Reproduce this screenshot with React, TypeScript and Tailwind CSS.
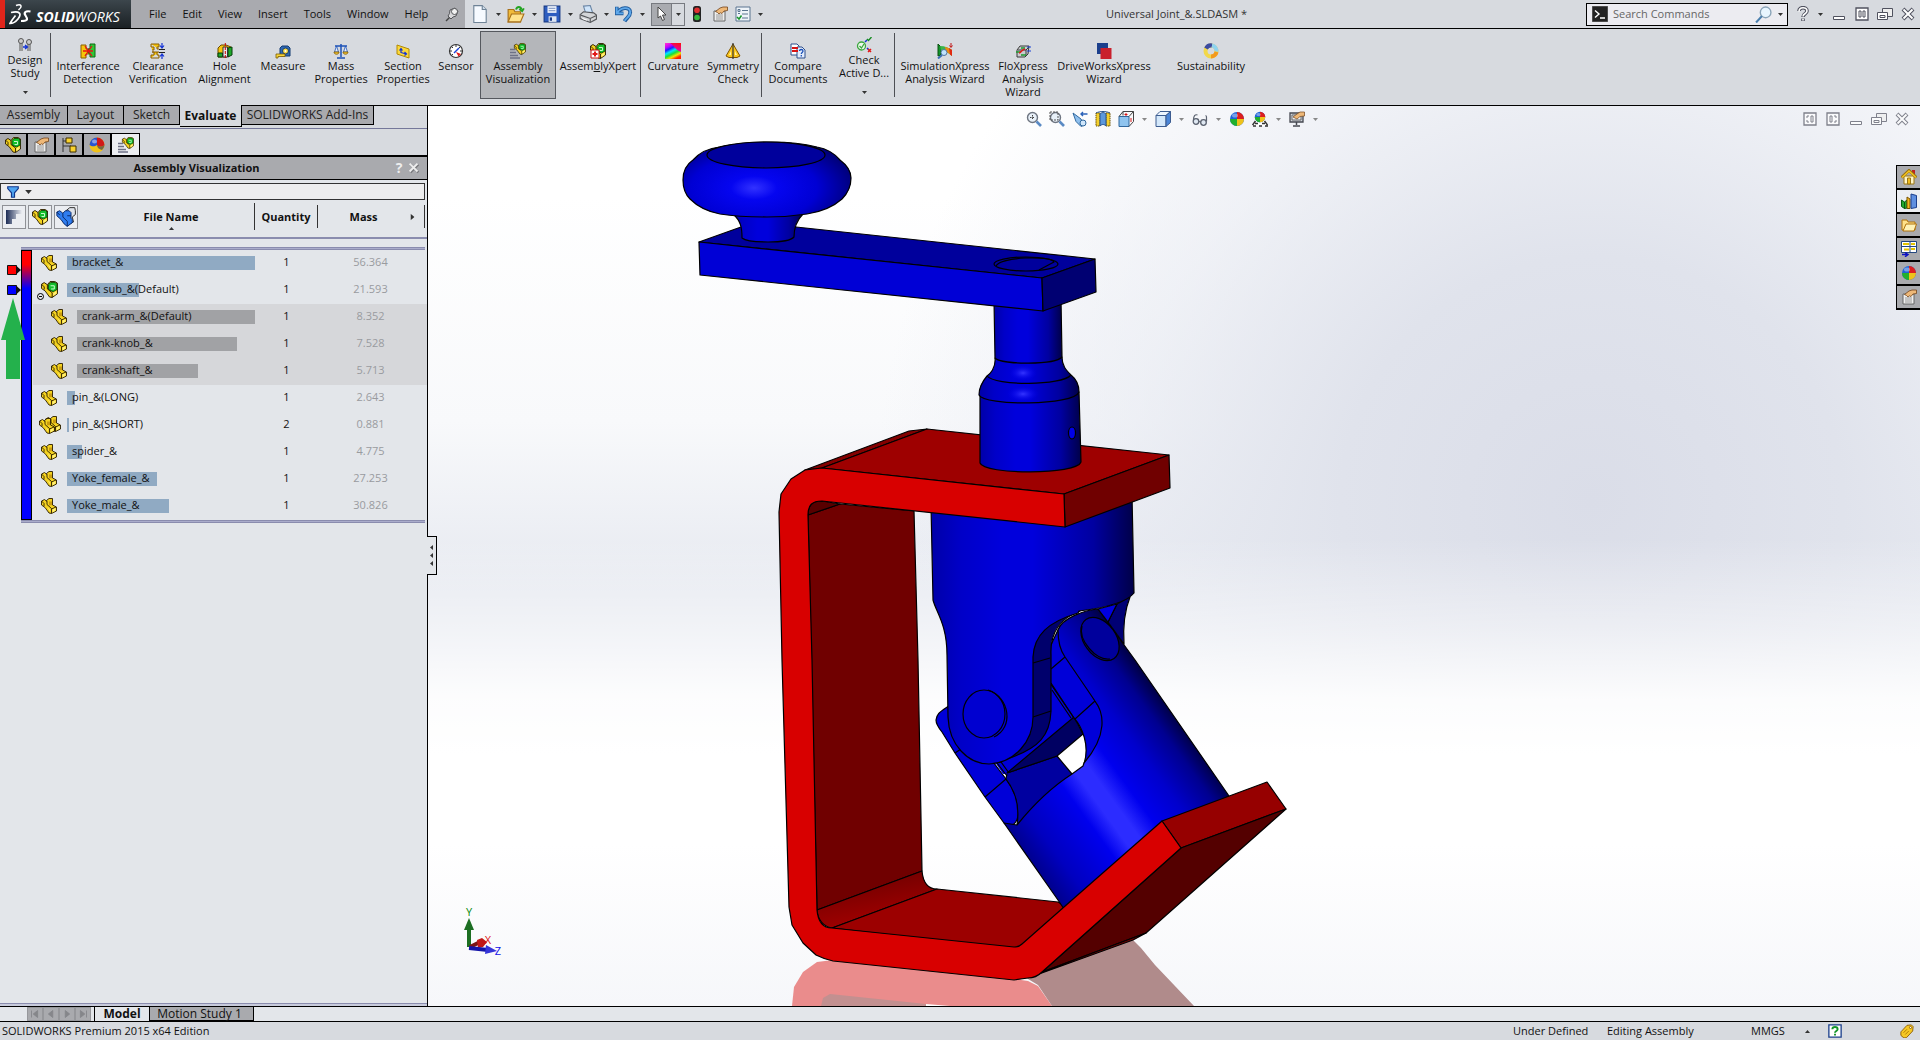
import { useState, type ReactNode } from "react";

type IconProps = { className?: string };

type PartRow = {
  id: string;
  name: string;
  quantity: number;
  mass: string;
  bar: number;
  icon: "part" | "assembly" | "multi";
  child?: boolean;
};

type Command = {
  lines: string[];
  icon: ReactNode;
  width: string;
  active?: boolean;
  dropdown?: boolean;
  divider?: boolean;
  accessKey?: string;
};

const menus = ["File", "Edit", "View", "Insert", "Tools", "Window", "Help"];

const tabs = [
  { name: "Assembly", width: "w-[68px]" },
  { name: "Layout", width: "w-[56px]" },
  { name: "Sketch", width: "w-[56px]" },
  { name: "Evaluate", width: "w-[62px]" },
  { name: "SOLIDWORKS Add-Ins", width: "w-[132px]" },
];

const rows: PartRow[] = [
  { id: "bracket", name: "bracket_&", quantity: 1, mass: "56.364", bar: 188, icon: "part" },
  { id: "crank-sub", name: "crank sub_&(Default)", quantity: 1, mass: "21.593", bar: 72, icon: "assembly" },
  { id: "crank-arm", name: "crank-arm_&(Default)", quantity: 1, mass: "8.352", bar: 178, icon: "part", child: true },
  { id: "crank-knob", name: "crank-knob_&", quantity: 1, mass: "7.528", bar: 160, icon: "part", child: true },
  { id: "crank-shaft", name: "crank-shaft_&", quantity: 1, mass: "5.713", bar: 121, icon: "part", child: true },
  { id: "pin-long", name: "pin_&(LONG)", quantity: 1, mass: "2.643", bar: 8, icon: "part" },
  { id: "pin-short", name: "pin_&(SHORT)", quantity: 2, mass: "0.881", bar: 2, icon: "multi" },
  { id: "spider", name: "spider_&", quantity: 1, mass: "4.775", bar: 15, icon: "part" },
  { id: "yoke-female", name: "Yoke_female_&", quantity: 1, mass: "27.253", bar: 90, icon: "part" },
  { id: "yoke-male", name: "Yoke_male_&", quantity: 1, mass: "30.826", bar: 102, icon: "part" },
];

function Icon({ className = "size-4", box = "0 0 16 16", children }: IconProps & { box?: string; children: ReactNode }) {
  return (
    <svg viewBox={box} className={`shrink-0 ${className}`} fill="none" aria-hidden="true">
      {children}
    </svg>
  );
}

function Caret({ className = "h-[3px] w-[5px] text-[#333]" }: IconProps) {
  return (
    <svg viewBox="0 0 5 3" className={`shrink-0 ${className}`} aria-hidden="true">
      <path d="M0 0h5L2.500 3z" fill="currentColor" />
    </svg>
  );
}

const partShape = (
  <>
    <path d="M.5 3 3.500 1.500 6 3.500 5.500 2.500 8 .5h3.500v6.500l4 2v4L10.500 15.500 8 15 4 9.500.5 7z" fill="#f4d21f" stroke="#2a1d00" strokeWidth=".9" />
    <path d="M8 3.500h3V7L8 7.500z" fill="#c99c10" />
    <path d="M6 3.500v3l4.500 4V15.500M10.500 11l4.500-2M.5 3 3 5.500V8" stroke="#2a1d00" strokeWidth=".9" />
    <path d="m11.500 11.500 3-1.500v2.500l-3 2zM6.500 9l2.500 2.500v2z" fill="#fff07a" />
  </>
);

const assemblyShape = (
  <>
    <path d="M.5 3 3 1.500l3 2L8.500.5H13L15.500 2v10L10.500 15.500 8 15 4 9.500.5 7z" fill="#f4d21f" stroke="#2a1d00" strokeWidth=".9" />
    <path d="M7 3.500 9 1.500h4.500L15 3v5l-3.500 2L7 8z" fill="#14c02c" stroke="#064d0c" strokeWidth=".9" />
    <path d="M9 4.500h3.500v3H9.500" stroke="#d8ffd8" strokeWidth=".9" />
    <path d="M6 3.500v4l4.500 3.500v4.500M.5 3 3 5.500V8" stroke="#2a1d00" strokeWidth=".9" />
    <path d="m11.500 11.500 3-2v2.500l-3 2z" fill="#fff07a" />
  </>
);

const ballShape = (
  <>
    <circle cx="8" cy="8" r="7" fill="#1d62d8" />
    <path d="M8 8V1a7 7 0 0 1 7 7z" fill="#dc1f1f" />
    <path d="M8 8h7a7 7 0 0 1-7 7z" fill="#efc21a" />
    <path d="M8 8v7a7 7 0 0 1-7-7z" fill="#21b02d" />
    <ellipse cx="6" cy="4.500" rx="3" ry="2" fill="#fff" opacity=".4" />
  </>
);

const handSheet = (
  <>
    <path d="M2 5h11v10H2z" fill="#eee" stroke="#666" />
    <path d="M4 9h7M4 11h7M4 13h7" stroke="#999" />
    <path d="M3.500 5.500 8 2l3-1h4.500v3.500L12 5l-2 2.500-1.500-.7L7 8 5.500 6.500z" fill="#eeb878" stroke="#73451c" strokeWidth=".8" />
  </>
);

function PartIcon() {
  return <Icon>{partShape}</Icon>;
}

function AssemblyIcon({ className }: IconProps) {
  return <Icon className={className}>{assemblyShape}</Icon>;
}

function MultiPartIcon() {
  return (
    <Icon className="h-[18px] w-[22px]" box="0 0 22 18">
      <g transform="translate(6 0)">{partShape}</g>
      <g transform="translate(0 2)">{partShape}</g>
    </Icon>
  );
}

function BallIcon({ className }: IconProps) {
  return <Icon className={className}>{ballShape}</Icon>;
}

function HandSheetIcon({ className }: IconProps) {
  return <Icon className={className}>{handSheet}</Icon>;
}

function VisualizeIcon({ className }: IconProps) {
  return (
    <Icon className={className}>
      <path d="M0 6.500h5M0 9.500h6M0 12.500h8M0 15h10" stroke="#6e7286" strokeWidth="1.600" />
      <g transform="translate(4 0) scale(.74)">{assemblyShape}</g>
    </Icon>
  );
}

const commands: Command[] = [
  {
    lines: ["Design", "Study"],
    width: "w-[50px]",
    dropdown: true,
    divider: true,
    icon: (
      <Icon>
        <path d="M4 5v9M12 5v9" stroke="#555" strokeWidth="3" />
        <path d="M4 5v9M12 5v9" stroke="#ddd" />
        <circle cx="4" cy="4" r="2.500" fill="#ccc" stroke="#555" />
        <circle cx="12" cy="5" r="2.500" fill="#ccc" stroke="#555" />
        <path d="M6 10h4m-2-2 2.500 2L8 12" stroke="#1332d6" strokeWidth="1.300" />
      </Icon>
    ),
  },
  {
    lines: ["Interference", "Detection"],
    width: "w-[74px]",
    icon: (
      <Icon>
        <path d="M1 2h5v4h4v5H6v4H1z" fill="#f6c50c" stroke="#8b5e00" />
        <path d="M15 1h-5v5H8v4h2v4h5z" fill="#2fc636" stroke="#0c6b12" />
        <path d="m5 3 7 10M12 3 5 13M3 8h10" stroke="#e81414" strokeWidth="1.300" />
      </Icon>
    ),
  },
  {
    lines: ["Clearance", "Verification"],
    width: "w-[66px]",
    icon: (
      <Icon>
        <path d="M1 1h8v3H7v2h2M1 1v3h3v3H2M1 15v-3h3V9H2h7M9 15H1M9 15v-3H7V9" fill="#f6c50c" stroke="#8b5e00" />
        <path d="M9 6.500h6M9 9.500h6" stroke="#222" />
        <path d="M12 0v4m-2-1.500L12 5l2-2.500M12 16v-4m-2 1.500L12 11l2 2.500" stroke="#1332d6" strokeWidth="1.200" />
      </Icon>
    ),
  },
  {
    lines: ["Hole", "Alignment"],
    width: "w-[67px]",
    icon: (
      <Icon>
        <path d="M1 5 4 2h5l5 2v7l-4 3H1z" fill="#f6c50c" stroke="#6c4a00" />
        <path d="M1 10h4.500v4H1zM11 5l4-1v8l-4 2z" fill="#1fa82a" stroke="#063f0b" />
        <path d="M6 4h4.500v10H6z" fill="#e8e8e8" stroke="#333" />
        <path d="M8.300 0v16" stroke="#c00" strokeDasharray="3 1" />
      </Icon>
    ),
  },
  {
    lines: ["Measure"],
    width: "w-[50px]",
    icon: (
      <Icon>
        <path d="M5 12V5l2-2h6l2 2v8H7z" fill="#2f69b4" stroke="#123a70" />
        <circle cx="10.500" cy="8" r="3" fill="#f6d743" stroke="#123a70" />
        <circle cx="10.500" cy="8" r="1" fill="#fff" />
        <path d="M1 11h9v2.500H3V15H1z" fill="#f8d63a" stroke="#7a5a00" strokeWidth=".8" />
      </Icon>
    ),
  },
  {
    lines: ["Mass", "Properties"],
    width: "w-[66px]",
    icon: (
      <Icon>
        <path d="M2 3h12M8 1v13M4 15h8" stroke="#1d52b8" strokeWidth="1.500" />
        <path d="m3.500 3-2 6h4zM12.500 3l-2 6h4z" fill="#e5eefb" stroke="#1d52b8" strokeWidth=".8" />
        <path d="M1 9h5c0 3-5 3-5 0zM10 9h5c0 3-5 3-5 0z" fill="#f1c232" stroke="#805b00" strokeWidth=".8" />
      </Icon>
    ),
  },
  {
    lines: ["Section", "Properties"],
    width: "w-[58px]",
    icon: (
      <Icon>
        <path d="M2 2 14 6v9L2 11z" fill="#fbd83c" stroke="#b38a00" />
        <path d="M6 10V6m-1.500 1.500L6 5.500l1.500 2M6 9.500l5 1.500m-1.500-2 2 2-2 1.500" stroke="#1332d6" strokeWidth="1.200" />
      </Icon>
    ),
  },
  {
    lines: ["Sensor"],
    width: "w-[48px]",
    icon: (
      <Icon>
        <circle cx="8" cy="8" r="6.500" fill="#fff" stroke="#333" strokeWidth="1.200" />
        <path d="M8 2v2M2 8h2M12 8h2M4 4l1 1M12 4l-1 1M4 12l1-1" stroke="#333" />
        <path d="m6 10 5-5" stroke="#1c43d6" strokeWidth="1.400" />
        <path d="m8 9 5 2-2.500 2.500z" fill="#e31818" />
      </Icon>
    ),
  },
  { lines: ["Assembly", "Visualization"], width: "w-[76px]", active: true, icon: <VisualizeIcon /> },
  {
    lines: ["AssemblyXpert"],
    width: "w-[84px]",
    divider: true,
    accessKey: "b",
    icon: (
      <Icon>
        {assemblyShape}
        <path d="M1 7h8v8H1z" fill="#fff" stroke="#c81010" />
        <path d="M5 8.500v5M2.500 11h5" stroke="#e31818" strokeWidth="2" />
      </Icon>
    ),
  },
  {
    lines: ["Curvature"],
    width: "w-[64px]",
    icon: (
      <Icon>
        <defs>
          <linearGradient id="curv" x1="2" y1="0" x2="10" y2="16" gradientUnits="userSpaceOnUse">
            <stop offset="0" stopColor="#ff2bd0" />
            <stop offset=".22" stopColor="#c000ff" />
            <stop offset=".36" stopColor="#2020ff" />
            <stop offset=".52" stopColor="#00e5ff" />
            <stop offset=".68" stopColor="#17e03a" />
            <stop offset=".84" stopColor="#f5e400" />
            <stop offset="1" stopColor="#ff2000" />
          </linearGradient>
          <linearGradient id="curv2" x1="14" y1="0" x2="8" y2="16" gradientUnits="userSpaceOnUse">
            <stop offset="0" stopColor="#ff1010" />
            <stop offset=".5" stopColor="#e000c0" />
            <stop offset="1" stopColor="#00c8ff" />
          </linearGradient>
        </defs>
        <path d="M0 0h16v16H0z" fill="url(#curv2)" />
        <path d="M0 0h5c4 2 5 7 11 9v7H0z" fill="url(#curv)" />
      </Icon>
    ),
  },
  {
    lines: ["Symmetry", "Check"],
    width: "w-[56px]",
    divider: true,
    icon: (
      <Icon>
        <path d="m8 1 7 12-3 1.500H4L1 13z" fill="#f9c51c" stroke="#7d5200" />
        <path d="M8 0v16" stroke="#333" strokeWidth="1.200" />
        <path d="m6 8-2 4h2zM10 8l2 4h-2z" fill="#fff2a8" />
      </Icon>
    ),
  },
  {
    lines: ["Compare", "Documents"],
    width: "w-[72px]",
    icon: (
      <Icon>
        <path d="M1 1h6l2 2v9H1z" fill="#fff" stroke="#2d4f8c" />
        <path d="M7 4h5l3 3v8H7z" fill="#e3ecfb" stroke="#2d4f8c" />
        <path d="M2 5h6M2 8h6" stroke="#d81414" strokeWidth="2" />
        <path d="M9.500 8c0-2 3.500-2 3.500 0 0 1.500-1.700 1.500-1.700 3m0 1v1.500" stroke="#1d52b8" strokeWidth="1.300" />
      </Icon>
    ),
  },
  {
    lines: ["Check", "Active D..."],
    width: "w-[60px]",
    dropdown: true,
    divider: true,
    icon: (
      <Icon>
        <circle cx="5.500" cy="9" r="4" fill="#eef8ee" stroke="#3aa83e" strokeWidth="1.300" />
        <path d="m3.500 9 2 2 2.500-4" stroke="#3aa83e" strokeWidth="1.300" />
        <path d="M9 5l2-2m0 8 2 2" stroke="#1332d6" strokeWidth="1.500" />
        <path d="m11 2 1.500 1.500L15.500 0" stroke="#118a1c" strokeWidth="1.300" />
        <path d="m12 12 3 3m0-3-3 3" stroke="#e31818" strokeWidth="1.500" />
      </Icon>
    ),
  },
  {
    lines: ["SimulationXpress", "Analysis Wizard"],
    width: "w-[100px]",
    icon: (
      <Icon>
        <path d="M1 1v12l3-1V4z" fill="#12952a" stroke="#08500f" />
        <path d="M3 3c5 0 9 2 12 4v6C11 9 8 8 4 9z" fill="#39b54a" />
        <path d="M8 4c3 .6 5 1.600 7 3v6c-2-2-4-3.500-6-4z" fill="#ee8a12" />
        <path d="M12 5c1 .5 2 1.200 3 2v6l-2-1.500z" fill="#e12a12" />
        <path d="M14 0v4m-1.500-1.500L14 4.500l1.500-2" stroke="#c01010" />
        <circle cx="7" cy="9.500" r="3" fill="#bfe3ff" stroke="#52749c" />
        <path d="m5 12-4 3.500" stroke="#3c6fb4" strokeWidth="2" />
      </Icon>
    ),
  },
  {
    lines: ["FloXpress", "Analysis", "Wizard"],
    width: "w-[56px]",
    icon: (
      <Icon>
        <path d="M2 7 5 3h9l-1 8-3 3H2z" fill="#c9cbd0" stroke="#3a3a3a" />
        <path d="M3 7h8v6M11 7l3-3" stroke="#3a3a3a" />
        <path d="M1 9h5m0-4h4M6 12h5" stroke="#1c9c2c" strokeWidth="1.400" />
        <path d="M4 10c3-1 2-3 6-4" stroke="#e31818" strokeWidth="1.400" />
        <path d="M12 4h4m-4 4h4" stroke="#1c43d6" strokeWidth="1.200" />
      </Icon>
    ),
  },
  {
    lines: ["DriveWorksXpress", "Wizard"],
    width: "w-[106px]",
    icon: (
      <Icon>
        <path d="M1 0h11v11H1z" fill="#1c3f8c" />
        <path d="M4.500 5h11v11h-11z" fill="#c9202c" />
      </Icon>
    ),
  },
  {
    lines: ["Sustainability"],
    width: "w-[108px]",
    icon: (
      <Icon>
        <circle cx="8" cy="8" r="5.500" stroke="#f2d84a" strokeWidth="4" />
        <path d="M3 5.500A5.600 5.600 0 0 1 9 2.500" stroke="#3b4ba0" strokeWidth="4" />
        <path d="M9 2.500A5.600 5.600 0 0 1 13.500 8.500" stroke="#8ed3f0" strokeWidth="4" />
        <path d="M13.500 9A5.600 5.600 0 0 1 8 13.500" stroke="#f39a1e" strokeWidth="4" />
      </Icon>
    ),
  },
];

const quickAccess = [
  {
    name: "New",
    icon: (
      <Icon className="size-[18px]">
        <path d="M2.500.5h7.500l3.500 3.500v11.500h-11z" fill="#f6faff" stroke="#6f8396" />
        <path d="M10 .5V4h3.500" fill="#cfdcea" stroke="#6f8396" />
      </Icon>
    ),
  },
  {
    name: "Open",
    icon: (
      <Icon className="size-[18px]">
        <path d="M1 4h5l1 2h5v9H1z" fill="#f0bb3a" stroke="#a7701a" />
        <path d="m1 15 3-7h11l-3 7z" fill="#ffe38c" stroke="#a7701a" />
        <path d="M8 4c1-3 4-3 5 0m-2-.5 2.500 2L15 3" stroke="#22a322" strokeWidth="1.700" />
      </Icon>
    ),
  },
  {
    name: "Save",
    icon: (
      <Icon className="size-[18px]">
        <path d="M1 1h14v14H1z" fill="#2d5dc0" stroke="#173a86" />
        <path d="M4 1h8v6H4z" fill="#eef3fb" />
        <path d="M5 3h6M5 5h6" stroke="#8fa3c8" />
        <path d="M5 10h7v5H5z" fill="#dfe6f2" />
        <path d="M6 11h2v3H6z" fill="#173a86" />
      </Icon>
    ),
  },
  {
    name: "Print",
    icon: (
      <Icon className="size-[18px]">
        <path d="m4 1 6-.5 2 6-6 1z" fill="#cfe4fa" stroke="#6b86a6" />
        <path d="M1 8.500 4 6l9 1 2.500 2v3.500L10 15.500 1 12z" fill="#d3d5d8" stroke="#54565a" />
        <path d="m1.500 9 8.500 3 5-2.500M10 12v3" stroke="#54565a" />
        <path d="m3 12 4 1.500" stroke="#fff" />
      </Icon>
    ),
  },
  {
    name: "Undo",
    icon: (
      <Icon className="size-[18px]">
        <path d="M1.500 1.500v6h6M2 7C5 2 13 1 13.500 6c.5 4-3 5-5 8.500" stroke="#1f5c9e" strokeWidth="3.400" />
        <path d="M1.500 2v5.500h6M2 7C5 2 13 1 13.500 6c.5 4-3 5-5 8" stroke="#5fa8ea" strokeWidth="1.600" />
      </Icon>
    ),
  },
];

function MinimizeIcon() {
  return (
    <Icon>
      <path d="M2.500 10.500h11v3h-11z" fill="#fff" stroke="#50525f" />
    </Icon>
  );
}

function RestoreIcon() {
  return (
    <Icon>
      <path d="M5.500 2.500h10v8h-10z" fill="#eee" stroke="#50525f" />
      <path d="M.5 6.500h10v7H.5z" fill="#fff" stroke="#50525f" />
      <path d="M3 9.500h5v2H3z" stroke="#50525f" />
    </Icon>
  );
}

function CloseIcon() {
  return (
    <Icon>
      <path d="m3 3 10 10M13 3 3 13" stroke="#50525f" strokeWidth="4" />
      <path d="m3.500 3.500 9 9M12.500 3.500l-9 9" stroke="#fff" strokeWidth="2" />
    </Icon>
  );
}

function TileIcon() {
  return (
    <Icon>
      <path d="M2 2h12v12H2z" fill="#fff" stroke="#50525f" strokeWidth="1.300" />
      <path d="M5 5h2v6H5zM9 5h2v6H9z" stroke="#50525f" />
    </Icon>
  );
}

function CascadeIcon({ flip }: { flip?: boolean }) {
  return (
    <Icon>
      <g transform={flip ? "translate(16 0) scale(-1 1)" : undefined}>
        <path d="M2 2h12v12H2z" fill="#fff" stroke="#50525f" strokeWidth="1.300" />
        <path d="M9 5h2v6H9z" stroke="#50525f" />
        <path d="M7 5H5v2M5 9v2h2" stroke="#50525f" />
      </g>
    </Icon>
  );
}

function MagnifierIcon({ children }: { children?: ReactNode }) {
  return (
    <Icon>
      <circle cx="6.500" cy="6.500" r="5" fill="#e8f0f8" stroke="#6f7682" strokeWidth="1.400" />
      {children}
      <path d="m10.500 10.500 4.500 4.500" stroke="#5a8ac4" strokeWidth="2.600" />
    </Icon>
  );
}

const viewTools: { name: string; icon: ReactNode; dropdown?: boolean }[] = [
  {
    name: "Zoom to Fit",
    icon: (
      <MagnifierIcon>
        <path d="M4 6.500h5M6.500 4v5" stroke="#444" strokeDasharray="1.500 1" />
      </MagnifierIcon>
    ),
  },
  {
    name: "Zoom to Area",
    icon: (
      <MagnifierIcon>
        <path d="M1 1h8v8H1z" stroke="#555" strokeDasharray="2 1" />
      </MagnifierIcon>
    ),
  },
  {
    name: "Previous View",
    icon: (
      <Icon>
        <path d="m1 2 8 6 3 6-3 1.500-5-5z" fill="#8fc0ee" stroke="#31689e" />
        <circle cx="11" cy="12" r="3" fill="#cfe6fb" stroke="#31689e" />
        <path d="M15.500 3H9m2-2L9 3l2 2" stroke="#2a62b8" strokeWidth="1.400" />
      </Icon>
    ),
  },
  {
    name: "Section View",
    icon: (
      <Icon>
        <path d="M1 2h4v13H1zM11 2h4v13h-4z" fill="#f4cf2e" stroke="#6b5200" strokeDasharray="1.500 .7" />
        <path d="M5 3c2-2 4-2 6 0v12c-2-2-4-2-6 0z" fill="#5c98dc" stroke="#27538c" />
        <path d="M1 2c4-2 10-2 14 0" stroke="#27538c" />
      </Icon>
    ),
  },
  {
    name: "View Orientation",
    dropdown: true,
    icon: (
      <Icon>
        <path d="M1 5.500h10v10H1z" fill="#8fc4ef" stroke="#31689e" />
        <path d="m1 5.500 4-5h10.500v10L11 15.500M11 5.500l4.500-5M5 .5v4" stroke="#444" />
        <path d="M8 2v3m-1.500-1.500h3M13 7v4" stroke="#d81414" />
      </Icon>
    ),
  },
  {
    name: "Display Style",
    dropdown: true,
    icon: (
      <Icon>
        <path d="M1 4.500h10v11H1z" fill="#d4e8fb" stroke="#3c5c90" />
        <path d="m1 4.500 4-4h10.500l-4.500 4z" fill="#eef6ff" stroke="#3c5c90" />
        <path d="M11 4.500 15.500.5v11l-4.500 4z" fill="#4b86d8" stroke="#3c5c90" />
      </Icon>
    ),
  },
  {
    name: "Hide/Show Items",
    dropdown: true,
    icon: (
      <Icon>
        <circle cx="4" cy="10.500" r="2.800" fill="#dfe8f2" stroke="#5b6270" strokeWidth="1.300" />
        <circle cx="11.500" cy="11.500" r="2.800" fill="#dfe8f2" stroke="#5b6270" strokeWidth="1.300" />
        <path d="M1.500 9C1.500 5 3 3 5.500 4M14.500 10.500c0-4 .3-6-1-6M7 10.500l2 .5" stroke="#5b6270" strokeWidth="1.200" />
      </Icon>
    ),
  },
  { name: "Edit Appearance", icon: <BallIcon /> },
  {
    name: "Apply Scene",
    dropdown: true,
    icon: (
      <Icon>
        <path d="m0 15 3-5h10l3 5z" fill="#fff" />
        <path d="M1 15h3m3 0h3m3 0h3M3 12.500h3m4 0h3M.5 14l3-4M15.500 14l-3-4" stroke="#333" strokeWidth="1.500" />
        <g transform="translate(2 0) scale(.75)">{ballShape}</g>
      </Icon>
    ),
  },
  {
    name: "View Settings",
    dropdown: true,
    icon: (
      <Icon>
        <path d="M1 2h13v9H1z" fill="#cfd3da" stroke="#454850" strokeWidth="1.300" />
        <path d="M3 4h9v5H3z" fill="#eef1f6" stroke="#666" />
        <path d="M7.500 11v3M4 15h7" stroke="#454850" strokeWidth="1.500" />
        <path d="m4 6 4-3 3-2h4.500v4L11 5.500 8 8z" fill="#eeb878" stroke="#73451c" strokeWidth=".7" />
      </Icon>
    ),
  },
];

const taskPane = [
  {
    name: "SOLIDWORKS Resources",
    icon: (
      <Icon>
        <path d="M11 1h3v6h-3z" fill="#c02222" />
        <path d="M3 7h10v8H3z" fill="#fff6c8" stroke="#9a7412" />
        <path d="m.5 8.500 7.500-7 7.500 7" stroke="#9a7412" strokeWidth="3" />
        <path d="m1 8.500 7-6.500 7 6.500" stroke="#f5c51f" strokeWidth="1.500" />
        <path d="M6.500 9h3v6h-3z" fill="#f1bd1c" stroke="#9a7412" />
      </Icon>
    ),
  },
  {
    name: "Design Library",
    icon: (
      <Icon>
        <path d="m.5 7 3 2v6.500l-3-2zM3.500 9 6 7v8l-2.500.5z" fill="#22a92c" stroke="#075c10" />
        <path d="m6 4 3 2v9.500H6z" fill="#f3b81c" stroke="#7c5400" />
        <path d="m10 1 5.500 1.500v12L10 15.500z" fill="#5f8fe0" stroke="#1c3f8c" />
      </Icon>
    ),
  },
  {
    name: "File Explorer",
    icon: (
      <Icon>
        <path d="M1 3h5l1 2h7v8H1z" fill="#ffe28a" stroke="#b0720c" />
        <path d="m2 14 3-7h10.500L13 14z" fill="#fff3b8" stroke="#b0720c" />
      </Icon>
    ),
  },
  {
    name: "View Palette",
    icon: (
      <Icon>
        <path d="M.5.5h15v11H.5z" fill="#fff" stroke="#24477e" />
        <path d="M2 3h6M10 3h4M3 8.500h5M10 8h4" stroke="#e3c400" strokeWidth="2" />
        <path d="M9 1v10M1 5.500h14" stroke="#24477e" />
        <path d="M1 13.500h5m-2-2 3 2-3 2.300" stroke="#0b10c4" strokeWidth="1.500" />
      </Icon>
    ),
  },
  { name: "Appearances", icon: <BallIcon /> },
  { name: "Custom Properties", icon: <HandSheetIcon /> },
];

function TitleBar() {
  return (
    <header className="flex h-[29px] shrink-0 items-stretch border-b border-black bg-[#d7dadf]">
      <div className="flex w-[131px] items-center gap-1 border-l-[5px] border-[#e1251b] bg-gradient-to-b from-[#3c464c] to-[#1b2125] pl-1 text-white">
        <Icon className="h-[22px] w-[23px]" box="0 0 23 22">
          <path d="M7 2.500c5-2 7 .5 2.500 4.500" stroke="#fff" strokeWidth="1.500" />
          <path d="M2 9.500c9-2 11 1.500 7 6.500-2 2.500-5 4.500-8 4.500 1.500-3 3.500-5.500 5.500-8" stroke="#fff" strokeWidth="1.700" />
          <path d="M21.500 8.500c-5-1-7 1-5 4s3.500 5.500-4.500 5.500" stroke="#fff" strokeWidth="2.200" />
        </Icon>
        <span className="pt-1.5 text-sm italic leading-4">
          <b>SOLID</b>WORKS
        </span>
      </div>
      <nav className="flex w-[334px] items-center bg-[#a9aaaf] pl-2.5 pt-px">
        {menus.map((menu) => (
          <button key={menu} className="px-2">
            {menu}
          </button>
        ))}
        <button aria-label="Pin menu" className="ml-2">
          <Icon>
            <path d="m2 14 4-4" stroke="#444" strokeWidth="1.500" />
            <path d="m4 9 3 3 2-2 3-1 2-5-3-3-5 2-.5 3.500z" fill="#d8d8da" stroke="#55565a" />
            <circle cx="10.500" cy="4.500" r="3" fill="#f2f2f2" stroke="#55565a" />
          </Icon>
        </button>
      </nav>
      <div className="flex items-center pl-1.5">
        {quickAccess.map((item) => (
          <button key={item.name} aria-label={item.name} className="flex w-9 items-center justify-between pr-1.5">
            {item.icon}
            <Caret />
          </button>
        ))}
        <div className="flex h-[23px] border border-[#777a80]">
          <button aria-label="Select" className="flex w-5 items-center justify-center border-r border-[#777a80] bg-[#a9abb0]">
            <Icon>
              <path d="m4 1 8 8H8.500l2 4.500-2 1-2-4.500L4 12z" fill="#fff" stroke="#444" />
            </Icon>
          </button>
          <button aria-label="Select options" className="flex w-3 items-center justify-center">
            <Caret />
          </button>
        </div>
        <button aria-label="Rebuild" className="flex w-[23px] justify-center">
          <Icon>
            <rect x="4" width="8" height="16" rx="2.500" fill="#232323" />
            <circle cx="8" cy="4.300" r="2.800" fill="#e03030" />
            <circle cx="8" cy="11.500" r="2.800" fill="#35b83c" />
          </Icon>
        </button>
        <button aria-label="File Properties" className="flex w-[23px] justify-center">
          <HandSheetIcon />
        </button>
        <button aria-label="Options" className="flex w-[23px] justify-center">
          <Icon>
            <path d="M1 1h14v14H1z" fill="#eef3f8" stroke="#5a7590" />
            <path d="M3 3.500h2v2H3zM3 7.500h2" stroke="#5a7590" />
            <path d="M7 4.500h6M7 8h6M7 12h6" stroke="#5a7590" />
            <path d="m2 11 2 2 2.500-3.500" stroke="#15952a" strokeWidth="1.500" />
          </Icon>
        </button>
        <Caret className="ml-1 h-[3px] w-[5px] text-[#333]" />
      </div>
      <div className="flex flex-1 items-center justify-center pl-1 pt-px text-[#333]">Universal Joint_&amp;.SLDASM *</div>
      <div className="flex items-center gap-[7px] pr-1">
        <label className="flex h-[23px] w-[202px] items-center border border-black bg-[#ececf1] pl-[5px] pr-1">
          <Icon>
            <path d="M0 0h16v16H0z" fill="#222" stroke="#777" />
            <path d="m3 4.500 4 3.500-4 3.500M8 12h5" stroke="#fff" strokeWidth="1.400" />
          </Icon>
          <input
            aria-label="Search Commands"
            placeholder="Search Commands"
            className="ml-1 w-full min-w-0 bg-transparent px-px outline-none placeholder:text-[#666]"
          />
          <Icon className="size-[17px]">
            <circle cx="10" cy="6" r="5" fill="#e8f6ff" stroke="#8aa4b8" strokeWidth="1.300" />
            <path d="m6.500 9.500-5.500 6" stroke="#4a7fae" strokeWidth="2" />
          </Icon>
          <Caret className="ml-1.5 h-[3px] w-[5px] text-[#333]" />
        </label>
        <button aria-label="Help" className="flex w-7 items-center justify-between">
          <Icon>
            <path d="M4 5c0-4.500 8-4.500 8 0 0 3-4 2.500-4 6m0 1.500V15" stroke="#50525f" strokeWidth="3.600" />
            <path d="M4 5.500c0-5 8-5 8-.5 0 3-4 2.500-4 5.500m0 2.300v1.700" stroke="#fff" strokeWidth="1.600" />
          </Icon>
          <Caret />
        </button>
        <button aria-label="Minimize" className="ml-px">
          <MinimizeIcon />
        </button>
        <button aria-label="Tile">
          <TileIcon />
        </button>
        <button aria-label="Restore">
          <RestoreIcon />
        </button>
        <button aria-label="Close">
          <CloseIcon />
        </button>
      </div>
    </header>
  );
}

function CommandLabel({ line, accessKey }: { line: string; accessKey?: string }) {
  if (!accessKey) return <span className="block">{line}</span>;
  const at = line.indexOf(accessKey);
  return (
    <span className="block">
      {line.slice(0, at)}
      <u>{accessKey}</u>
      {line.slice(at + 1)}
    </span>
  );
}

function CommandBar() {
  return (
    <div className="flex h-[77px] shrink-0 items-stretch border-b border-black bg-[#d7dadf] pb-1.5 pt-0.5">
      {commands.map((command) => (
        <div key={command.lines.join(" ")} className="flex items-stretch">
          <button
            className={`flex flex-col items-center whitespace-nowrap leading-[13px] ${command.width} ${
              command.dropdown ? "pt-[5px]" : "pt-[11px]"
            } ${command.active ? "border border-[#55585e] bg-[#b4b6ba]" : "border border-transparent"}`}
          >
            {command.icon}
            <span>
              {command.lines.map((line) => (
                <CommandLabel key={line} line={line} accessKey={command.accessKey} />
              ))}
            </span>
            {command.dropdown ? <Caret className="mb-1 mt-auto h-[3px] w-[5px] text-[#333]" /> : null}
          </button>
          {command.divider ? <div className="my-0.5 w-px bg-[#4d4f54]" /> : null}
        </div>
      ))}
    </div>
  );
}

function PartsTable() {
  return (
    <table className="w-full table-fixed border-collapse">
      <colgroup>
        <col className="w-[33px]" />
        <col className="w-[222px]" />
        <col className="w-[63px]" />
        <col />
      </colgroup>
      <thead>
        <tr className="h-[38px] border-b-2 border-[#8a8cae]">
          <th colSpan={2} className="p-0 pb-1 align-middle font-bold">
            <div className="flex items-center border-r border-[#333]">
              <div className="flex gap-0.5 pl-0.5">
                <button aria-label="Value bars" className="flex size-6 items-center justify-center border border-[#8f9196] bg-[#ebedf1]">
                  <Icon>
                    <defs>
                      <linearGradient id="fade" gradientUnits="userSpaceOnUse" x1="0" y1="0" x2="16" y2="0">
                        <stop stopColor="#1b2b55" />
                        <stop offset="1" stopColor="#1b2b55" stopOpacity="0" />
                      </linearGradient>
                    </defs>
                    <path d="M0 1h16v4H0zM0 5h10v5H0zM0 10h6v5H0z" fill="url(#fade)" />
                  </Icon>
                </button>
                <button aria-label="Flat or nested view" className="flex size-6 items-center justify-center border border-[#8f9196] bg-[#ebedf1]">
                  <AssemblyIcon />
                </button>
                <button aria-label="Group identical" className="flex size-6 items-center justify-center border border-[#8f9196] bg-[#ebedf1]">
                  <Icon className="size-5">
                    <path d="m8 3 3-2.500h4L15.500 3v3L13 8l1 4-4 2z" fill="#dfe3ea" stroke="#333" strokeWidth=".8" />
                    <path d="M.7 4 3 3l2.500 2 2-2h3l1.500 1.500V9l1 1v2.500l-4 3-2.500-2L4 10 .7 7z" fill="#2f7df0" stroke="#0c2c6c" strokeWidth=".8" />
                    <path d="M5.500 5v3L9 11.500v4M9 7h3M.7 4 3 6.500" stroke="#0c2c6c" strokeWidth=".8" />
                  </Icon>
                </button>
              </div>
              <div className="flex flex-1 flex-col items-center gap-0.5 pl-2.5 pt-1.5 leading-4">
                File Name
                <Caret className="h-[3px] w-[5px] rotate-180 text-[#333]" />
              </div>
            </div>
          </th>
          <th className="p-0 pb-1 font-bold">
            <div className="border-r border-[#333] leading-[23px]">Quantity</div>
          </th>
          <th className="p-0 pb-1 font-bold">
            <div className="mr-0.5 flex items-center border-r border-[#333] pr-2 leading-[23px]">
              <span className="flex-1">Mass</span>
              <Caret className="h-[4px] w-[7px] -rotate-90 text-[#333]" />
            </div>
          </th>
        </tr>
        <tr aria-hidden="true">
          <td colSpan={4} className="p-0 pl-[21px] pr-0.5 pt-2">
            <div className="h-[3px] border-y border-[#8a8cae] bg-[#aaaccb]" />
          </td>
        </tr>
      </thead>
      <tbody>
        {rows.map((row, index) => (
          <tr key={row.id} className={row.child ? "h-[27px] bg-[#d6d7da]" : "h-[27px]"}>
            {index === 0 ? (
              <td rowSpan={rows.length} className="relative bg-[#e3e6ea] p-0 pl-[21px]">
                <div className="h-[270px] w-[11px] border border-black bg-[linear-gradient(to_bottom,#f00_5%,#00f_14%)]" />
                <button aria-label="Red slider" className="absolute left-[7px] top-[15px]">
                  <Icon className="h-[10px] w-[14px]" box="0 0 14 10">
                    <path d="M9 .5 14 5 9 9.500z" fill="#111" />
                    <path d="M.5.5h9v9h-9z" fill="#f00" stroke="#111" />
                  </Icon>
                </button>
                <button aria-label="Blue slider" className="absolute left-[7px] top-[35px]">
                  <Icon className="h-[10px] w-[14px]" box="0 0 14 10">
                    <path d="M9 .5 14 5 9 9.500z" fill="#111" />
                    <path d="M.5.5h9v9h-9z" fill="#00f" stroke="#111" />
                  </Icon>
                </button>
                <Icon className="absolute left-px top-12 h-[81px] w-6" box="0 0 24 81">
                  <path d="M12 0 24 42h-5v39H5V42H0z" fill="#24b14c" />
                </Icon>
              </td>
            ) : null}
            <td className="p-0">
              <div className={`relative flex h-[27px] items-center pb-0.5 ${row.child ? "pl-[18px]" : row.icon === "multi" ? "pl-1.5" : "pl-2"}`}>
                <span className="flex w-[26px] items-center">
                  {row.icon === "assembly" ? <AssemblyIcon className="size-[17px]" /> : null}
                  {row.icon === "part" ? <PartIcon /> : null}
                  {row.icon === "multi" ? <MultiPartIcon /> : null}
                </span>
                {row.icon === "assembly" ? (
                  <button aria-label="Collapse" className="absolute bottom-1 left-1 flex size-[7px] items-center justify-center rounded-sm border border-black bg-[#e3e6ea]">
                    <span className="h-px w-[3px] bg-black" />
                  </button>
                ) : null}
                <div className={`relative flex h-[14px] flex-1 items-center ${row.icon === "multi" ? "ml-0.5" : ""}`}>
                  <div
                    className={row.child ? "h-full bg-[#a1a2a5]" : "h-full bg-[#90aac3]"}
                    style={{ width: row.bar }}
                  />
                  <span className="absolute left-[5px] whitespace-nowrap">{row.name}</span>
                </div>
              </div>
            </td>
            <td className="p-0 pb-0.5 text-center">{row.quantity}</td>
            <td className="p-0 pb-0.5 pr-1 text-center text-[#999b9f]">{row.mass}</td>
          </tr>
        ))}
      </tbody>
      <tfoot aria-hidden="true">
        <tr>
          <td colSpan={4} className="p-0 pl-[21px] pr-0.5">
            <div className="h-[3px] border-y border-[#8a8cae] bg-[#aaaccb]" />
          </td>
        </tr>
      </tfoot>
    </table>
  );
}

function ManagerPanel() {
  const [tab, setTab] = useState("Evaluate");

  return (
    <aside className="relative flex w-[428px] shrink-0 flex-col border-r border-black bg-[#e3e6ea]">
      <div className="flex h-[22px] items-start bg-[#d7dadf] text-xs">
        {tabs.map((item) => (
          <button
            key={item.name}
            onClick={() => setTab(item.name)}
            className={`whitespace-nowrap border-b border-r border-black ${item.width} ${
              item.name === tab ? "-mt-px h-[22px] bg-[#d7dadf] font-bold" : "h-[19px] bg-[#a9aaae] text-[#222]"
            }`}
          >
            {item.name}
          </button>
        ))}
      </div>
      <div className="flex h-[29px] shrink-0 items-end border-b-2 border-t border-b-black border-t-[#75789a] bg-[#d7dadf]">
        {[
          { name: "FeatureManager", icon: <AssemblyIcon /> },
          { name: "PropertyManager", icon: <HandSheetIcon /> },
          {
            name: "ConfigurationManager",
            icon: (
              <Icon>
                <path d="M2 1v14M2 4h4M2 9h8v3" stroke="#333" />
                <path d="M5 1h6v5H5zM9 9h6v6H9z" fill="#fad32e" stroke="#3b2c00" />
              </Icon>
            ),
          },
          {
            name: "DisplayManager",
            icon: (
              <Icon>
                <circle cx="8" cy="8" r="7.500" fill="#f0c21a" />
                <path d="M.5 8A7.500 7.500 0 0 1 8 .5V8c-2 1.500-5 2-7.500 0z" fill="#2a55d0" />
                <path d="M8 .5A7.500 7.500 0 0 1 15.500 8C13 10 10 10 8 8z" fill="#d01818" />
                <path d="M8 8c2 2 5 2 7.500 0-.3 2-1 3.500-2.500 5-3-.5-5-2.500-5-5z" fill="#222a60" opacity=".6" />
                <ellipse cx="5.500" cy="4.500" rx="2.500" ry="2" fill="#fff" opacity=".45" />
              </Icon>
            ),
          },
        ].map((item) => (
          <button key={item.name} aria-label={item.name} className="flex h-[22px] w-7 items-center justify-center border-r-2 border-t border-black bg-[#a9aaae]">
            {item.icon}
          </button>
        ))}
        <button aria-label="Assembly Visualization" className="flex h-[22px] w-7 items-center justify-center border-r border-t border-black bg-[#eceef1]">
          <VisualizeIcon />
        </button>
      </div>
      <div className="flex h-[23px] shrink-0 items-center border-b border-black bg-[#a9aaae] px-1.5">
        <h2 className="flex-1 pr-1 text-center font-bold">Assembly Visualization</h2>
        <button aria-label="Panel help" className="w-4 text-sm font-bold leading-4 text-[#eee]">
          ?
        </button>
        <button aria-label="Close panel">
          <Icon className="size-3.5">
            <path d="m4 4 9 9M13 4l-9 9" stroke="#77787c" strokeWidth="2.500" />
            <path d="m3 3 9 9M12 3l-9 9" stroke="#eee" strokeWidth="2.200" />
          </Icon>
        </button>
      </div>
      <div className="mr-0.5 mt-[3px] flex h-[17px] shrink-0 items-center gap-1.5 border border-[#333] bg-[#ededee] pl-1.5">
        <Icon className="size-3">
          <path d="M1 1h14v2.500L10 9v6H6V9L1 3.500z" fill="#4fa4f0" stroke="#12378c" strokeWidth="1.600" />
        </Icon>
        <Caret className="h-[4px] w-[7px] text-[#333]" />
      </div>
      <PartsTable />
      <button
        aria-label="Collapse panel"
        className="absolute -right-2.5 top-[430px] z-10 flex h-[39px] w-2.5 flex-col items-center justify-evenly border border-l-0 border-black bg-[#e3e6ea] py-1"
      >
        <Caret className="h-[3px] w-[5px] rotate-90 text-[#333]" />
        <Caret className="h-[3px] w-[5px] rotate-90 text-[#333]" />
        <Caret className="h-[3px] w-[5px] rotate-90 text-[#333]" />
      </button>
      <div className="mt-auto h-[3px] border-t border-[#8a8cae] bg-[#c8cbdc]" />
    </aside>
  );
}

function Model() {
  return (
    <svg
      viewBox="428 106 1492 900"
      preserveAspectRatio="xMinYMin slice"
      className="size-full"
      fill="none"
      aria-label="Universal joint model"
      role="img"
    >
      <defs>
        <radialGradient id="knob" gradientUnits="userSpaceOnUse" cx="754" cy="188" r="105" gradientTransform="translate(0 92) scale(1 .51)">
          <stop offset="0" stopColor="#3232ff" />
          <stop offset=".22" stopColor="#0505f0" />
          <stop offset=".6" stopColor="#0000d4" />
          <stop offset="1" stopColor="#000070" />
        </radialGradient>
        <linearGradient id="cyl">
          <stop offset="0" stopColor="#0000a8" />
          <stop offset=".15" stopColor="#0000c8" />
          <stop offset=".35" stopColor="#0000dc" />
          <stop offset=".5" stopColor="#0000dc" />
          <stop offset=".8" stopColor="#0000a0" />
          <stop offset="1" stopColor="#000048" />
        </linearGradient>
        <radialGradient id="spot">
          <stop offset="0" stopColor="#3434ff" />
          <stop offset="1" stopColor="#0000e6" stopOpacity="0" />
        </radialGradient>
        <linearGradient id="lower" gradientUnits="userSpaceOnUse" x1="1004" y1="823" x2="1168" y2="704">
          <stop offset="0" stopColor="#000090" />
          <stop offset=".12" stopColor="#0000c0" />
          <stop offset=".34" stopColor="#0000ee" />
          <stop offset=".43" stopColor="#2c2cff" />
          <stop offset=".5" stopColor="#2c2cff" />
          <stop offset=".6" stopColor="#0000ee" />
          <stop offset=".75" stopColor="#0000cc" />
          <stop offset=".9" stopColor="#000090" />
          <stop offset="1" stopColor="#000040" />
        </linearGradient>
        <linearGradient id="bend" x1="0" y1="0" x2=".4" y2="1">
          <stop offset=".2" stopColor="#700000" />
          <stop offset="1" stopColor="#a40000" />
        </linearGradient>
      </defs>

      {/* floor reflection */}
      <path d="M792 1006 794 987 803 972 817 962 833 960 1014 979 1028 981 1038 986 1052 1006z" fill="#ea8c8c" />
      <path d="M821 1006 823 998 830 994 926 1004V1006z" fill="#c29090" />
      <path d="M926 1004 950 1006H926z" fill="#fff" />
      <path d="M1028 979 1042 972 1133 940 1141 948 1155 965 1194 1006H1052L1038 985z" fill="#b08b8b" />

      <g stroke="#000" strokeWidth="1.200" strokeLinejoin="round">
        {/* bracket, inner faces */}
        <path d="M808 515 840 504 914 511 918 660 922 871 817 910z" fill="#700000" />
        <path d="M808 515C808 505 812 501 822 501L840 504z" fill="#580000" />
        <path d="M817 910 922 871C923 882 928 889 937 889L832 928C822 926 818 920 817 910z" fill="url(#bend)" />
        <path d="M832 928 937 889 1058 902 1080 915 1022 950z" fill="#9c0000" />

        {/* lower yoke */}
        <path d="M936 720C937 713 940 712 950 705L1006 779C1014 790 1020 803 1018 816 1016 826 1008 828 1004 823L985 797 955 753 942 732C938 727 936 724 936 720z" fill="#0000d8" />
        <path d="m985 797 21-18M955 753l6-4" />
        <path d="M1007 773 1057 756 1072 774 1017 825C1020 806 1016 792 1006 779z" fill="#0000a0" />
        <path d="M990 755 1033 740 1036 650 1060 640 1074 718 1007 774 1003 774z" fill="#0000d8" stroke="none" />
        <path d="m997 763 10 13M1001 762l8 11" />
        <path d="M1007 773 1074 717 1083 734 1057 756z" fill="#000062" />
        <path d="M1058 630 1050 647V683L1074 718C1082 727 1090 745 1084 764 1104 742 1112 725 1095 701z" fill="#0000d8" />
        <path d="M1051 669 1065 657M1051 683 1074 718M1052 690 1071 718M1075 719 1095 701" />
        <path d="M1098 609C1085 610 1062 618 1058 630 1058 640 1060 650 1065 657L1095 701C1104 713 1108 735 1084 763L1083 766 1072 774C1050 788 1034 804 1017 825L1004 823 1058 900 1066 912 1170 826 1229 796 1135 660z" fill="url(#lower)" />
        <path d="M1117 604 1130 597C1124 612 1123 628 1124 644L1108 622z" fill="#000074" />
        <path d="M1098 609 1117 604 1108 622z" fill="#0000e0" />
        <ellipse cx="1100" cy="639" rx="16" ry="24" transform="rotate(-36 1100 639)" fill="#00009c" />
        <path d="M1082 626C1078 640 1096 661 1110 659" />

        {/* upper yoke */}
        <path d="M1080 611C1058 619 1050 634 1051 655V711C1050 735 1040 748 1007 759L1020 720 1025 640 1060 605z" fill="#00006c" />
        <path d="M931 505 933 600C936 612 947 624 947 655L948 717C949 745 968 764 989 764 1014 763 1033 742 1033 717V657C1034 635 1048 622 1078 613L1079 611C1104 608 1126 603 1134 593L1132 495z" fill="url(#cyl)" />
        <path d="M1033 663 1050 658M1033 717 1051 711" />
        <ellipse cx="984" cy="714" rx="21" ry="24" fill="#0000d0" />
        <path d="M988 690C1010 697 1014 728 994 737" />

        {/* bracket, top */}
        <path d="M805 470 909 431 927 429 822 468z" fill="#840000" />
        <path d="M822 468 927 429 1169 455 1064 494z" fill="#9e0000" />
        <path d="M1064 494 1169 455 1170 488 1065 527z" fill="#700000" />

        {/* bracket, lower flange */}
        <path d="M1162 821 1267 782 1286 809 1181 848z" fill="#960000" />
        <path d="M1181 848 1286 809 1146 933 1042 972z" fill="#540000" />
        <path d="M1042 972 1146 933 1133 940 1028 978z" fill="#780000" />

        {/* bracket, front face */}
        <path
          d="M779 512 781 494 791 479 805 470 822 468 1064 494 1065 527 822 501C812 501 808 505 808 515L812 660 817 910C818 922 823 928 832 928L1014 947C1018 947 1020 946 1022 944L1064 907 1162 821 1181 848 1042 972C1038 976 1034 978 1028 978L1014 980 833 961C828 960 822 958 816 955L803 943 792 925 789 907 782 660z"
          fill="#d80000"
        />

        {/* crank shaft */}
        <path d="M980 395V463C984 475 1077 475 1081 462L1079 392z" fill="url(#cyl)" />
        <path d="M995 358C996 368 990 374 987 376 982 382 979 387 979 395 984 406 1074 406 1079 392 1079 384 1076 379 1071 375 1066 370 1062 366 1062 357z" fill="url(#cyl)" />
        <path d="M987 376C995 386 1062 386 1071 375" />
        <path d="M994 300 995 358C1002 365 1055 365 1062 357L1061 300z" fill="url(#cyl)" />
        <ellipse cx="1072" cy="433" rx="3.500" ry="6" fill="#0000e8" />

        {/* crank arm */}
        <path d="M699 242 755 222 796 227 1095 259 1042 278z" fill="#00009c" />
        <path d="M699 242 1042 278 1043 311 700 275z" fill="#0000d6" />
        <path d="M1042 278 1095 259 1096 292 1043 311z" fill="#000072" />
        <ellipse cx="1026" cy="264" rx="32" ry="7" />
        <path d="M996 266C1000 257 1050 255 1054 262L1039 270" />

        {/* knob */}
        <path d="M733 214C741 221 742 228 742 238 748 243 788 244 794 237 794 228 796 221 803 214z" fill="url(#cyl)" />
        <path
          d="M683 180C683 170 687 164 693 160 700 152 710 148 720 147 740 143 755 142 772 142 790 142 805 144 817 147 828 149 835 154 840 160 848 166 851 171 851 178 851 187 848 193 842 199 833 207 820 212 807 214 794 216 780 217 767 217 750 217 733 216 720 214 705 211 697 206 690 199 685 194 683 187 683 180z"
          fill="url(#knob)"
        />
        <ellipse cx="766" cy="155" rx="59" ry="13" fill="#00009c" />
      </g>
      <ellipse cx="1023" cy="373" rx="14" ry="8" fill="url(#spot)" />
      <ellipse cx="1023" cy="394" rx="16" ry="8" fill="url(#spot)" />

      {/* view triad */}
      <path d="M469 947V928" stroke="#1c6e22" strokeWidth="4" />
      <path d="m469 918 5 12h-10z" fill="#1c6e22" />
      <path d="m470 947 10-5" stroke="#7a1414" strokeWidth="4" />
      <path d="m477 940 5-2 5 4-4 5-5 1z" fill="#c01818" />
      <path d="M469 948 488 950" stroke="#1414a8" strokeWidth="4" />
      <path d="m486 945 11 6-12 3z" fill="#3434d8" />
      <g className="text-[11px]" textAnchor="middle">
        <text x="469" y="916" fill="#0a8a0a">Y</text>
        <text x="488" y="944" fill="#e01010">X</text>
        <text x="498" y="955" fill="#1010e8">Z</text>
      </g>
    </svg>
  );
}

function Viewport() {
  return (
    <main className="relative min-w-0 flex-1 overflow-hidden bg-white bg-[linear-gradient(to_bottom,transparent_48%,rgba(255,255,255,0.45)_58%,rgba(255,255,255,0.9)_66%,#fff_72%,#fff_82%,#f6f7fa_100%),radial-gradient(ellipse_48%_78%_at_78%_44%,#dadde8_0%,#e0e3ec_35%,rgba(230,233,241,0.6)_65%,transparent_100%),linear-gradient(to_bottom,#fff_10%,#f8f9fb_35%,#e6e9f0_54%)]">
      <div className="absolute inset-0">
        <Model />
      </div>
      <div className="absolute inset-x-0 top-[5px] flex items-center justify-center pr-1">
        {viewTools.map((tool) => (
          <button key={tool.name} aria-label={tool.name} className="flex items-center">
            <span className="flex w-[23px] justify-center">{tool.icon}</span>
            {tool.dropdown ? (
              <span className="flex w-3.5 justify-center">
                <Caret className="h-[3px] w-[5px] text-[#888]" />
              </span>
            ) : null}
          </button>
        ))}
      </div>
      <div className="absolute right-2.5 top-[5px] flex gap-[7px] opacity-70">
        <button aria-label="Previous pane">
          <CascadeIcon />
        </button>
        <button aria-label="Next pane">
          <CascadeIcon flip />
        </button>
        <button aria-label="Minimize document">
          <MinimizeIcon />
        </button>
        <button aria-label="Restore document">
          <RestoreIcon />
        </button>
        <button aria-label="Close document">
          <CloseIcon />
        </button>
      </div>
      <div className="absolute right-0 top-[59px] flex flex-col border-l border-t border-black">
        {taskPane.map((item, index) => (
          <button
            key={item.name}
            aria-label={item.name}
            className={`flex h-6 w-[23px] items-center justify-center border-b-2 border-b-black ${
              index === 1 ? "bg-[#eceef2]" : "bg-[#a9aaae]"
            }`}
          >
            {item.icon}
          </button>
        ))}
      </div>
    </main>
  );
}

const sheetNav = [
  { name: "First", d: "m11 4-5 4 5 4zM4 4v8" },
  { name: "Previous", d: "m10 4-5 4 5 4z" },
  { name: "Next", d: "m6 4 5 4-5 4z" },
  { name: "Last", d: "m5 4 5 4-5 4zM12 4v8" },
];

function BottomTabs() {
  return (
    <div className="flex h-4 shrink-0 items-stretch border-y border-black bg-[#e3e6ea] pl-[27px] text-xs leading-[14px]">
      {sheetNav.map((item) => (
        <button key={item.name} aria-label={item.name} className="flex w-4 items-center justify-center border border-[#96979b] bg-[#a9aaae]">
          <Icon className="size-3.5">
            <path d={item.d} fill="#85868a" stroke="#85868a" />
          </Icon>
        </button>
      ))}
      <button className="ml-[3px] w-14 border-x border-black bg-[#e3e6ea] font-bold">Model</button>
      <button className="w-[104px] border-b border-r border-black bg-[#a9aaae] pr-1">Motion Study 1</button>
    </div>
  );
}

function StatusBar() {
  return (
    <footer className="flex h-[18px] shrink-0 items-center bg-[#d7dadf] pl-0.5 pr-1.5 leading-4">
      <span className="flex-1">SOLIDWORKS Premium 2015 x64 Edition</span>
      <span className="w-[94px]">Under Defined</span>
      <span className="w-[144px]">Editing Assembly</span>
      <span className="w-[54px]">MMGS</span>
      <Caret className="h-[3px] w-[5px] rotate-180 text-[#333]" />
      <button aria-label="Quick tips" className="ml-[18px]">
        <Icon className="size-3.5">
          <path d="M1 1h14v14H1z" fill="#fff" stroke="#1c3f8c" strokeWidth="1.500" />
          <path d="M5 6c0-3.500 6-3.500 6 0 0 2-3 2-3 4m0 1v2" stroke="#15952a" strokeWidth="2.200" />
        </Icon>
      </button>
      <button aria-label="Tags" className="ml-[58px]">
        <Icon className="size-3.5">
          <path d="m1 9 7-7.500 5-.5 2 2-.5 5-7 7.500-3 .5L1 13z" fill="#f6c824" stroke="#8a5a00" />
          <circle cx="12" cy="4" r="1.200" fill="#fff" stroke="#8a5a00" />
          <path d="m4 10 4-4M6 12l4-4" stroke="#a87400" />
        </Icon>
      </button>
    </footer>
  );
}

export default function App() {
  return (
    <div className="flex h-screen flex-col overflow-hidden bg-[#d7dadf] font-['Open_Sans','Noto_Sans',sans-serif] text-[11px] text-[#111]">
      <TitleBar />
      <CommandBar />
      <div className="flex min-h-0 flex-1">
        <ManagerPanel />
        <Viewport />
      </div>
      <BottomTabs />
      <StatusBar />
    </div>
  );
}
